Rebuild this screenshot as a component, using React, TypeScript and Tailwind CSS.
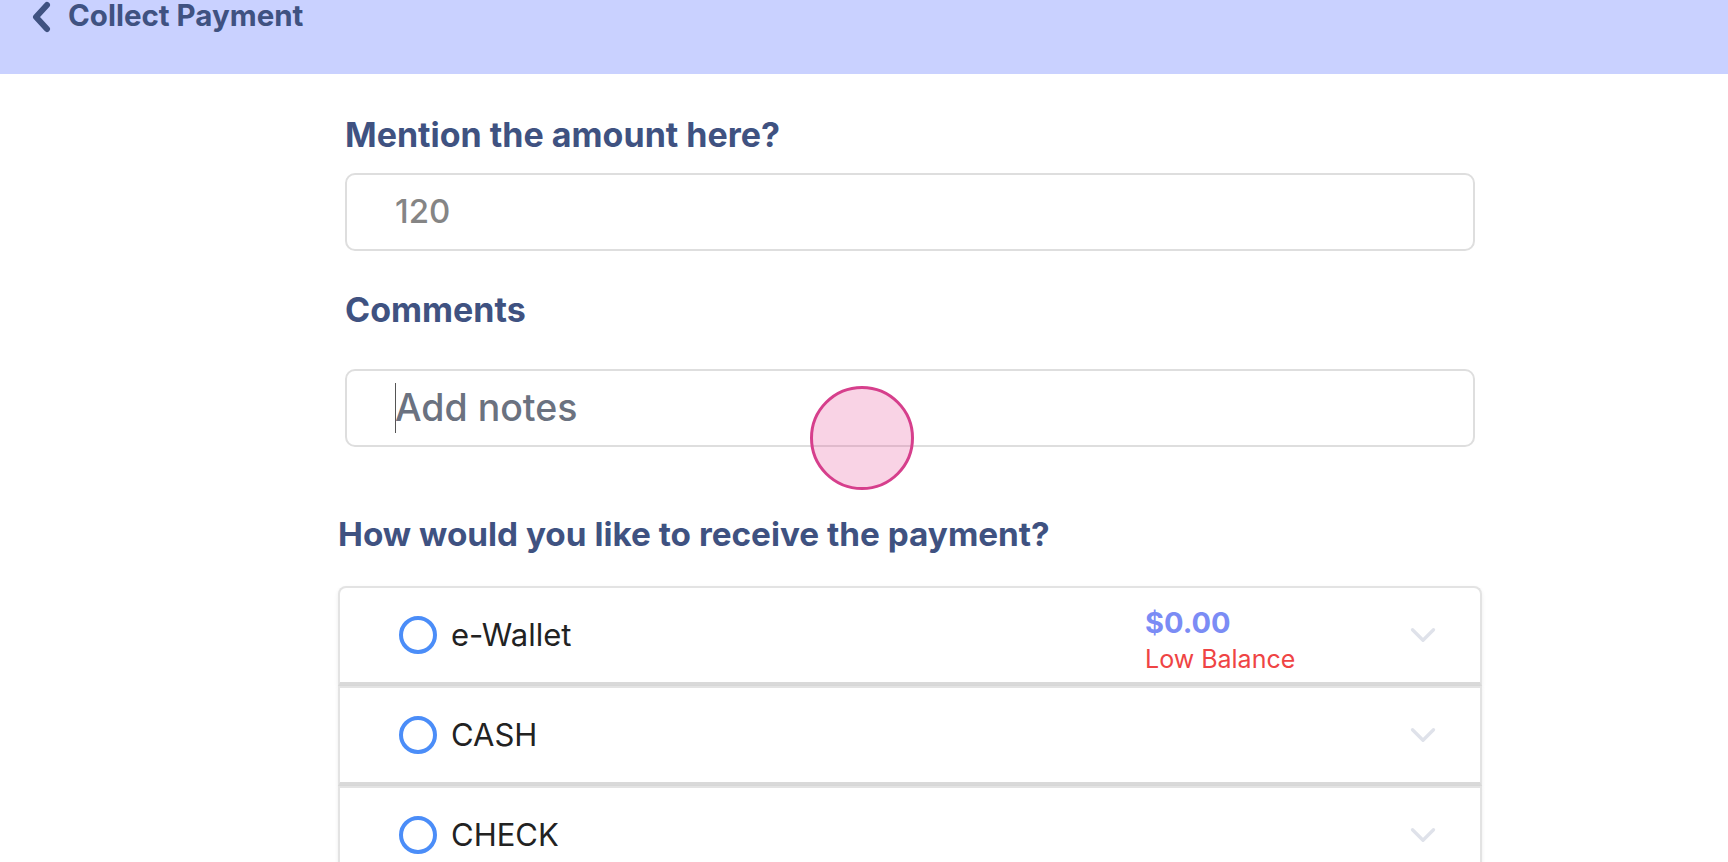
import React from 'react';
import { ChevronDown } from 'lucide-react';

const font = { fontFamily: 'Inter, "Noto Sans", sans-serif' };

interface MethodRowProps {
  label: string;
  first?: boolean;
  amount?: string;
  note?: string;
}

const MethodRow: React.FC<MethodRowProps> = ({ label, first, amount, note }) => {
  return (
    <div
      className={`flex items-center h-[100px] bg-white border-2 border-[#e3e3e3] border-b-[4px] border-b-[#d9d9d9] shadow-[0_2px_4px_rgba(0,0,0,0.08)] ${
        first ? 'rounded-t-lg' : ''
      }`}
    >
      {/* radio + nome */}
      <div className="flex items-center gap-[14px] pl-[59px]">
        <span className="block w-[38px] h-[38px] rounded-full border-[4px] border-[#4b8df8]" />
        <span className="text-[31px] leading-[36px] text-[#222222]">{label}</span>
      </div>
      <div className="flex-1" />
      {amount && (
        <div className="self-start flex flex-col w-[257px] pt-[18px]">
          <span className="text-[29px] leading-[34px] font-bold text-[#7b8cf5]">{amount}</span>
          <span className="mt-[4px] text-[25px] leading-[30px] text-[#ef4444]">{note}</span>
        </div>
      )}
      <div className="pr-[36px]">
        <ChevronDown size={42} strokeWidth={1.9} color="#dfe2ea" />
      </div>
    </div>
  );
};

export default function App() {
  return (
    <div className="relative min-h-[862px] bg-white" style={font}>
      {/* Header */}
      <div className="h-[74px] bg-[#c9d1ff] flex items-start pl-[30px]">
        <svg width="24" height="32" viewBox="0 0 24 32" className="mt-[1px]">
          <polyline points="17,4 6,16 17,28" fill="none" stroke="#3f5281" strokeWidth="6" strokeLinejoin="round" strokeLinecap="round" />
        </svg>
        <span className="ml-[14px] text-[29.5px] leading-[30px] font-bold text-[#3f5281]">Collect Payment</span>
      </div>

      {/* Form */}
      <div className="ml-[345px] w-[1130px] pt-[41px]">
        <div className="text-[34px] leading-[40px] font-bold text-[#3f5281]">Mention the amount here?</div>
        <div className="mt-[18px] h-[78px] rounded-[10px] border-2 border-[#dedede] flex items-center pl-[48px]">
          <span className="text-[33px] font-medium text-[#858585]">120</span>
        </div>

        <div className="mt-[39px] text-[34px] leading-[40px] font-bold text-[#3f5281]">Comments</div>
        <div className="mt-[39px] h-[78px] rounded-[10px] border-2 border-[#dedede] flex items-center pl-[48px]">
          <span className="w-px h-[50px] bg-[#555] -mr-px" />
          <span className="text-[37.5px] font-medium text-[#6b7280]">Add notes</span>
        </div>

        {/* Payment method */}
        <div className="-ml-[7px] w-[1144px]">
          <div className="mt-[67px] text-[33.3px] leading-[40px] font-bold text-[#3f5281]">
            How would you like to receive the payment?
          </div>
          <div className="mt-[32px] flex flex-col">
            <MethodRow label="e-Wallet" first amount="$0.00" note="Low Balance" />
            <MethodRow label="CASH" />
            <MethodRow label="CHECK" />
          </div>
        </div>
      </div>

      {/* tap indicator */}
      <div className="absolute left-[810px] top-[386px] w-[104px] h-[104px] rounded-full border-[3px] border-[#d63f8c] bg-[rgba(230,80,150,0.25)]" />
    </div>
  );
}
